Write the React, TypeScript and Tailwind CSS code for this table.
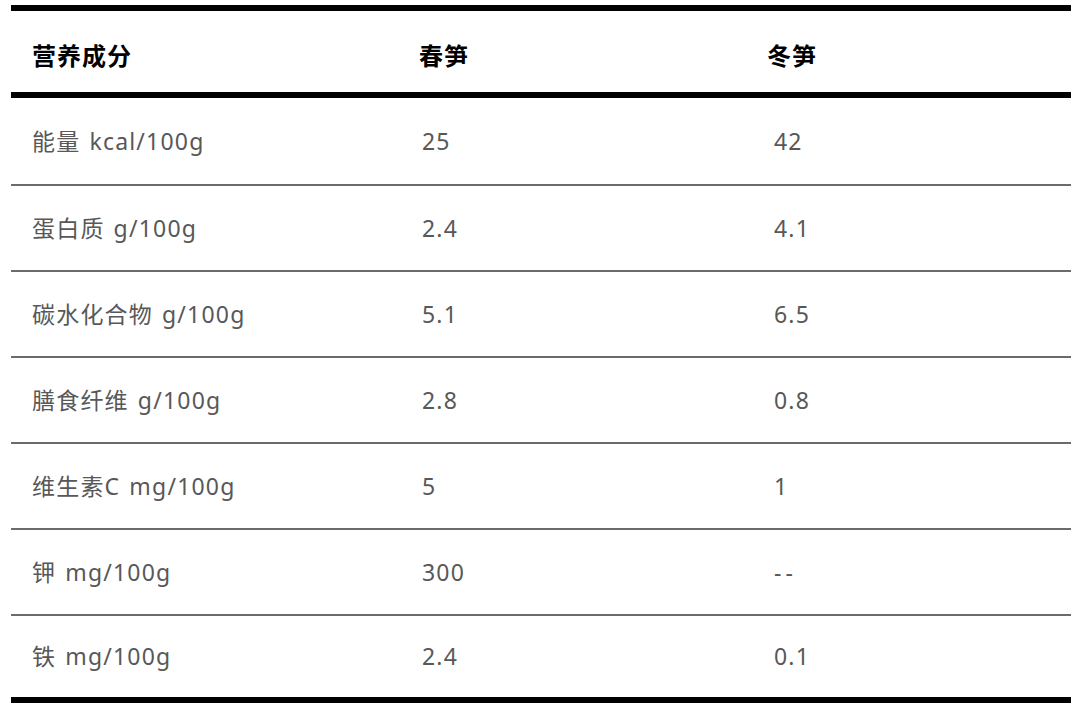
const rows: [string, string, string][] = [
  ["能量 kcal/100g", "25", "42"],
  ["蛋白质 g/100g", "2.4", "4.1"],
  ["碳水化合物 g/100g", "5.1", "6.5"],
  ["膳食纤维 g/100g", "2.8", "0.8"],
  ["维生素C mg/100g", "5", "1"],
  ["钾 mg/100g", "300", "--"],
  ["铁 mg/100g", "2.4", "0.1"],
];

const font = { fontFamily: '"Noto Sans", "Noto Sans CJK SC", sans-serif' };

export default function App() {
  return (
    <div className="min-h-[707px] bg-white px-[11px] pt-[5px]" style={font}>
      <div className="w-[1060px] border-t-[6px] border-b-[6px] border-black">
        <div className="grid h-[87px] grid-cols-[387px_350px_1fr] items-center border-b-[6px] border-black pt-[8px] text-[24px] font-bold tracking-[1px] text-black">
          <div className="pl-[21px]">营养成分</div>
          <div className="pl-[21px]">春笋</div>
          <div className="pl-[19px]">冬笋</div>
        </div>
        {rows.map(([name, spring, winter], i) => {
          const [label, unit] = name.split(" ");
          return (
            <div
              key={name}
              className={
                i === 0
                  ? "grid h-[88px] grid-cols-[387px_350px_1fr] items-center border-b-2 border-[#6b6b6b] text-[23px] tracking-[1.2px] text-[#585858]"
                  : i < rows.length - 1
                    ? "grid h-[86px] grid-cols-[387px_350px_1fr] items-center border-b-2 border-[#6b6b6b] text-[23px] tracking-[1.2px] text-[#585858]"
                    : "grid h-[81px] grid-cols-[387px_350px_1fr] items-center text-[23px] tracking-[1.2px] text-[#585858]"
              }
            >
              <div className="pl-[21px]">
                {label}
                <span className="ml-[9px]">{unit}</span>
              </div>
              <div className="pl-[24px]">{spring}</div>
              <div className={winter === "--" ? "pl-[26px] tracking-[4px]" : "pl-[26px]"}>{winter}</div>
            </div>
          );
        })}
      </div>
    </div>
  );
}
